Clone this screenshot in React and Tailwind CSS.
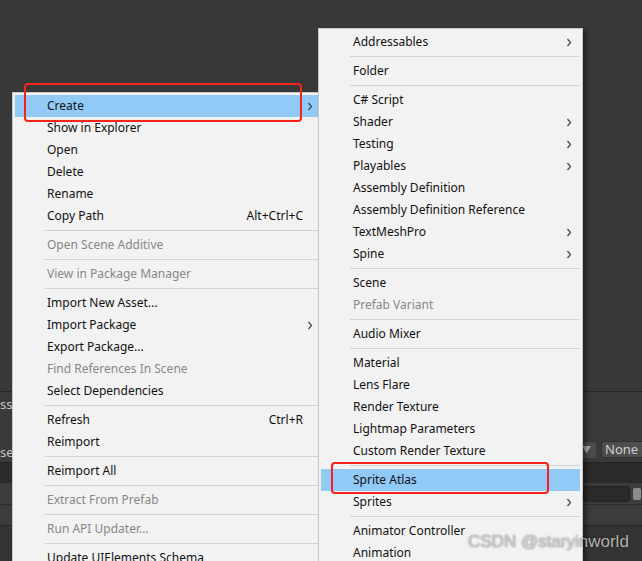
import React from "react";

const leftItems = [
  { label: "Create", arrow: true, active: true },
  { label: "Show in Explorer" },
  { label: "Open" },
  { label: "Delete" },
  { label: "Rename" },
  { label: "Copy Path", shortcut: "Alt+Ctrl+C" },
  "sep",
  { label: "Open Scene Additive", disabled: true },
  "sep",
  { label: "View in Package Manager", disabled: true },
  "sep",
  { label: "Import New Asset..." },
  { label: "Import Package", arrow: true },
  { label: "Export Package..." },
  { label: "Find References In Scene", disabled: true },
  { label: "Select Dependencies" },
  "sep",
  { label: "Refresh", shortcut: "Ctrl+R" },
  { label: "Reimport" },
  "sep",
  { label: "Reimport All" },
  "sep",
  { label: "Extract From Prefab", disabled: true },
  "sep",
  { label: "Run API Updater...", disabled: true },
  "sep",
  { label: "Update UIElements Schema" },
];

const createItems = [
  { label: "Addressables", arrow: true },
  "sep",
  { label: "Folder" },
  "sep",
  { label: "C# Script" },
  { label: "Shader", arrow: true },
  { label: "Testing", arrow: true },
  { label: "Playables", arrow: true },
  { label: "Assembly Definition" },
  { label: "Assembly Definition Reference" },
  { label: "TextMeshPro", arrow: true },
  { label: "Spine", arrow: true },
  "sep",
  { label: "Scene" },
  { label: "Prefab Variant", disabled: true },
  "sep",
  { label: "Audio Mixer" },
  "sep",
  { label: "Material" },
  { label: "Lens Flare" },
  { label: "Render Texture" },
  { label: "Lightmap Parameters" },
  { label: "Custom Render Texture" },
  "sep",
  { label: "Sprite Atlas", active: true },
  { label: "Sprites", arrow: true },
  "sep",
  { label: "Animator Controller" },
  { label: "Animation" },
];

const Chevron = () => (
  <svg width="6" height="9" viewBox="0 0 6 9" fill="none" stroke="#4a4a4a" strokeWidth="1.3">
    <polyline points="1.5 1 4.5 4.5 1.5 8" />
  </svg>
);

const MenuList = ({ items, right }) => (
  <div className="p-[2px]">
    {items.map((item, i) =>
      item === "sep" ? (
        <div key={i} className="h-[7px] pt-[3px] pl-[29px]">
          <div className="h-px bg-[#d4d4d4]"></div>
        </div>
      ) : (
        <div
          key={i}
          className={`h-[22px] flex items-center pl-[32px] ${right} ${item.active ? "bg-[#91c9f7]" : ""} ${item.disabled ? "text-[#878787]" : "text-[#111]"}`}
        >
          <span className="flex-1 whitespace-nowrap">{item.label}</span>
          {item.shortcut && <span className="whitespace-nowrap">{item.shortcut}</span>}
          <span className="w-[14px] flex justify-center">{item.arrow && <Chevron />}</span>
        </div>
      )
    )}
  </div>
);

export default function App() {
  return (
    <div
      className="relative w-[642px] h-[561px] overflow-hidden bg-[#383838] text-[12px]"
      style={{ fontFamily: '"Noto Sans", "Noto Sans CJK SC", sans-serif' }}
    >
      {/* editor panels behind the menus */}
      <div className="flex flex-col h-full">
        <div className="h-[391px] shrink-0"></div>
        <div className="h-px bg-[#262626]"></div>
        <div className="h-[70px] bg-[#3a3a3a] flex flex-col text-[#c4c4c4] text-[13px]">
          <div className="h-[26px] flex items-center">sse</div>
          <div className="h-[19px]"></div>
          <div className="h-[25px] flex items-center">
            <div className="w-[556px] shrink-0 translate-y-[3px]">set</div>
            <div className="flex items-center gap-[5px] shrink-0">
              <div className="w-[40px] h-[16px] shrink-0 rounded-[3px] bg-[#4b4b4b] flex justify-end items-center pr-[5px] text-[9px] text-[#a8a8a8]">▼</div>
              <div className="w-[60px] h-[17px] shrink-0 rounded-[3px] bg-[#4e4e4e] border border-[#303030] pl-[3px] flex items-center text-[#d0d0d0]">None</div>
            </div>
          </div>
        </div>
        <div className="h-px bg-[#232323]"></div>
        <div className="h-[20px] bg-[#2a2a2a]"></div>
        <div className="h-[21px] bg-[#3c3c3c] flex items-center pl-[583px] gap-[3px]">
          <div className="w-[47px] h-[16px] shrink-0 rounded-[3px] bg-[#2a2a2a] border border-[#212121]"></div>
          <div className="w-[8px] h-[12px] shrink-0 rounded-[2px] bg-[#8c8c8c]"></div>
        </div>
        <div className="h-px bg-[#2c2c2c]"></div>
        <div className="h-[20px] bg-[#3c3c3c]"></div>
        <div className="h-px bg-[#262626]"></div>
        <div className="flex-1 bg-[#333333]"></div>
      </div>

      {/* project context menu */}
      <div className="absolute left-[12px] top-[92px] w-[310px] bg-[#f2f2f2] border border-[#c8c8c8]">
        <MenuList items={leftItems} right="pr-[2px]" />
      </div>

      {/* Create submenu */}
      <div className="absolute left-[318px] top-[28px] w-[265px] bg-[#f2f2f2] border border-[#c8c8c8] shadow-[3px_3px_4px_rgba(0,0,0,0.45)]">
        <MenuList items={createItems} right="pr-[4px]" />
      </div>

      {/* annotation boxes */}
      <div className="absolute left-[24px] top-[83px] w-[278px] h-[39px] border-2 border-[#f5231c] rounded-[4px]"></div>
      <div className="absolute left-[331px] top-[462px] w-[218px] h-[32px] border-2 border-[#f5231c] rounded-[4px]"></div>

      {/* watermark */}
      <div
        className="absolute left-[468px] top-[529px] text-[17px] text-[rgba(215,215,215,0.8)] [text-shadow:0_0_2px_rgba(0,0,0,0.5)]"
        style={{ fontFamily: '"Liberation Sans", Arial, sans-serif' }}
      >
        CSDN @staryinworld
      </div>
    </div>
  );
}
